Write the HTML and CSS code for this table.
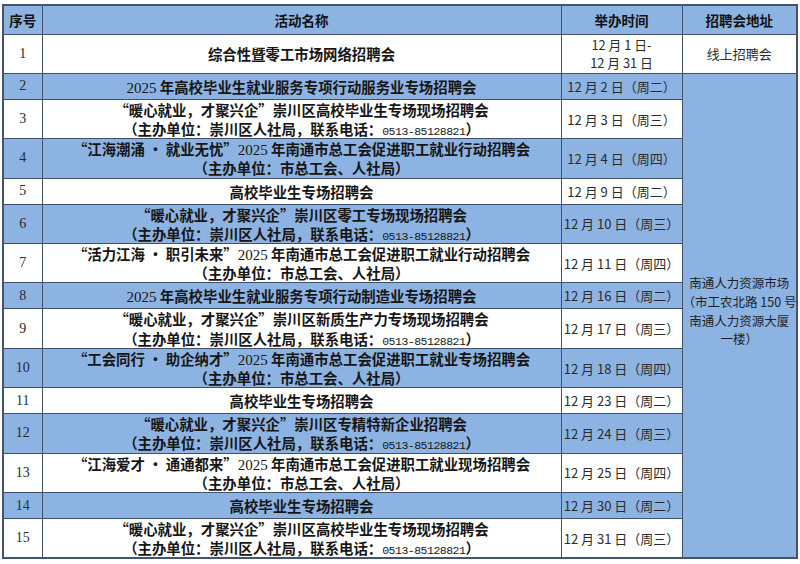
FILE: index.html
```html
<!DOCTYPE html>
<html lang="zh-CN">
<head>
<meta charset="utf-8">
<title>招聘会安排</title>
<link rel="stylesheet" href="styles.css">
</head>
<body>
<table class="sched">
  <colgroup>
    <col class="c-no">
    <col class="c-name">
    <col class="c-time">
    <col class="c-addr">
  </colgroup>
  <thead>
    <tr class="head">
      <th>序号</th>
      <th>活动名称</th>
      <th>举办时间</th>
      <th>招聘会地址</th>
    </tr>
  </thead>
  <tbody>
    <tr class="dbl">
      <td class="no">1</td>
      <td class="name">综合性暨零工市场网络招聘会</td>
      <td class="time"><div class="ln">12 月 1 日-</div><div class="ln">12 月 31 日</div></td>
      <td class="addr-online">线上招聘会</td>
    </tr>
    <tr class="sgl blue">
      <td class="no">2</td>
      <td class="name"><span class="num">2025</span> 年高校毕业生就业服务专项行动服务业专场招聘会</td>
      <td class="time">12 月 2 日（周二）</td>
      <td class="addr" rowspan="14"><div class="ln">南通人力资源市场</div><div class="ln">（市工农北路 150 号</div><div class="ln">南通人力资源大厦</div><div class="ln">一楼）</div></td>
    </tr>
    <tr class="dbl">
      <td class="no">3</td>
      <td class="name"><div class="ln">“暖心就业，才聚兴企”崇川区高校毕业生专场现场招聘会</div><div class="ln">（主办单位：崇川区人社局，联系电话：<span class="tel">0513-85128821</span>）</div></td>
      <td class="time">12 月 3 日（周三）</td>
    </tr>
    <tr class="dbl blue">
      <td class="no">4</td>
      <td class="name"><div class="ln">“江海潮涌 · 就业无忧”<span class="num">2025</span> 年南通市总工会促进职工就业行动招聘会</div><div class="ln">（主办单位：市总工会、人社局）</div></td>
      <td class="time">12 月 4 日（周四）</td>
    </tr>
    <tr class="sgl">
      <td class="no">5</td>
      <td class="name">高校毕业生专场招聘会</td>
      <td class="time">12 月 9 日（周二）</td>
    </tr>
    <tr class="dbl blue">
      <td class="no">6</td>
      <td class="name"><div class="ln">“暖心就业，才聚兴企”崇川区零工专场现场招聘会</div><div class="ln">（主办单位：崇川区人社局，联系电话：<span class="tel">0513-85128821</span>）</div></td>
      <td class="time">12 月 10 日（周三）</td>
    </tr>
    <tr class="dbl">
      <td class="no">7</td>
      <td class="name"><div class="ln">“活力江海 · 职引未来”<span class="num">2025</span> 年南通市总工会促进职工就业行动招聘会</div><div class="ln">（主办单位：市总工会、人社局）</div></td>
      <td class="time">12 月 11 日（周四）</td>
    </tr>
    <tr class="sgl blue">
      <td class="no">8</td>
      <td class="name"><span class="num">2025</span> 年高校毕业生就业服务专项行动制造业专场招聘会</td>
      <td class="time">12 月 16 日（周二）</td>
    </tr>
    <tr class="dbl">
      <td class="no">9</td>
      <td class="name"><div class="ln">“暖心就业，才聚兴企”崇川区新质生产力专场现场招聘会</div><div class="ln">（主办单位：崇川区人社局，联系电话：<span class="tel">0513-85128821</span>）</div></td>
      <td class="time">12 月 17 日（周三）</td>
    </tr>
    <tr class="dbl blue">
      <td class="no">10</td>
      <td class="name"><div class="ln">“工会同行 · 助企纳才”<span class="num">2025</span> 年南通市总工会促进职工就业专场招聘会</div><div class="ln">（主办单位：市总工会、人社局）</div></td>
      <td class="time">12 月 18 日（周四）</td>
    </tr>
    <tr class="sgl">
      <td class="no">11</td>
      <td class="name">高校毕业生专场招聘会</td>
      <td class="time">12 月 23 日（周二）</td>
    </tr>
    <tr class="dbl blue">
      <td class="no">12</td>
      <td class="name"><div class="ln">“暖心就业，才聚兴企”崇川区专精特新企业招聘会</div><div class="ln">（主办单位：崇川区人社局，联系电话：<span class="tel">0513-85128821</span>）</div></td>
      <td class="time">12 月 24 日（周三）</td>
    </tr>
    <tr class="dbl">
      <td class="no">13</td>
      <td class="name"><div class="ln">“江海爱才 · 通通都来”<span class="num">2025</span> 年南通市总工会促进职工就业现场招聘会</div><div class="ln">（主办单位：市总工会、人社局）</div></td>
      <td class="time">12 月 25 日（周四）</td>
    </tr>
    <tr class="sgl blue">
      <td class="no">14</td>
      <td class="name">高校毕业生专场招聘会</td>
      <td class="time">12 月 30 日（周二）</td>
    </tr>
    <tr class="dbl">
      <td class="no">15</td>
      <td class="name"><div class="ln">“暖心就业，才聚兴企”崇川区高校毕业生专场现场招聘会</div><div class="ln">（主办单位：崇川区人社局，联系电话：<span class="tel">0513-85128821</span>）</div></td>
      <td class="time">12 月 31 日（周三）</td>
    </tr>
  </tbody>
</table>
</body>
</html>
```

FILE: styles.css
```css
html, body {
  margin: 0;
  padding: 0;
  background: #ffffff;
}

body {
  padding: 4px 0 0 2px;
  font-family: "Noto Sans CJK SC", "Noto Sans", sans-serif;
  color: #1c1c1c;
}

.sched {
  border-collapse: collapse;
  table-layout: fixed;
  width: 794px;
  border: 2px solid #46546a;
}

.c-no { width: 39px; }
.c-name { width: 519px; }
.c-time { width: 121px; }
.c-addr { width: 115px; }

.sched th,
.sched td {
  border: 1.5px solid #42506a;
  padding: 0;
  text-align: center;
  vertical-align: middle;
}

.head th {
  height: 27.5px;
  background: #8db3e2;
  font-size: 13.5px;
  font-weight: 700;
  color: #111;
}

.sgl td { height: 25px; }
.dbl td { height: 38.4px; }

.blue td { background: #8db3e2; }

.ln {
  height: 19.2px;
  line-height: 19.2px;
  white-space: nowrap;
}

.no {
  font-family: "Liberation Serif", serif;
  font-size: 14px;
  color: #2a2a2a;
}

.name {
  font-size: 14.4px;
  font-weight: 700;
  color: #161616;
  white-space: nowrap;
}

.num {
  font-family: "Liberation Serif", serif;
  font-size: 15px;
  font-weight: 400;
}

.tel {
  font-family: "Liberation Mono", monospace;
  font-size: 11.5px;
  line-height: 1;
  letter-spacing: -0.5px;
  font-weight: 400;
}

.time {
  font-size: 13px;
  color: #2b2b2b;
  white-space: nowrap;
}

.time .ln {
  height: 18px;
  line-height: 18px;
  font-size: 12.8px;
}

.addr-online {
  font-size: 13px;
  color: #2b2b2b;
}

.sched td.addr {
  background: #8db3e2;
  font-size: 12.5px;
  color: #1f1f1f;
  padding-bottom: 8px;
}

.addr .ln {
  height: 18.8px;
  line-height: 18.8px;
}
```
